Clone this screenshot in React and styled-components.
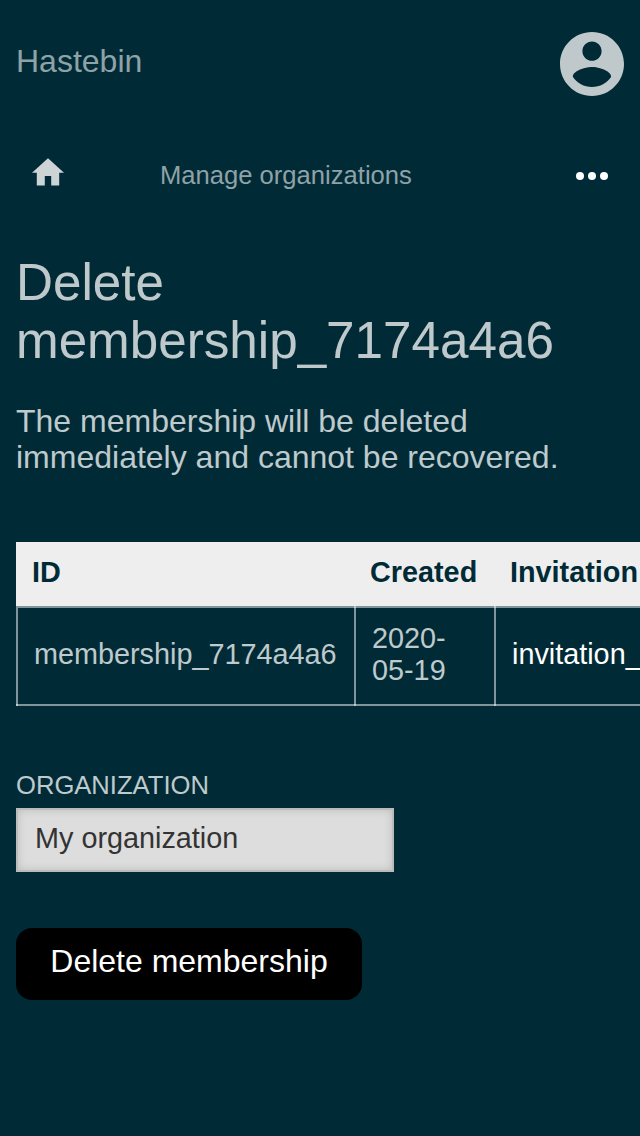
import React from 'react';
import styled, { createGlobalStyle } from 'styled-components';

const text = 'rgba(255, 255, 255, 0.75)';
const muted = '#8fa2a7';
const line = 'rgba(255, 255, 255, 0.5)';

const GlobalStyle = createGlobalStyle`
  *, *::before, *::after { box-sizing: border-box; }
  html { overflow: hidden; }
  body {
    margin: 0;
    background: #002b36;
    color: ${text};
    font-family: 'Liberation Sans', Arial, sans-serif;
    font-size: 32px;
    line-height: 36px;
  }
`;

const Page = styled.div`
  width: 100%;
  height: 1136px;
  overflow: hidden;
`;

const Header = styled.header`
  display: flex;
  align-items: center;
  justify-content: space-between;
  height: 128px;
  padding: 0 16px;
`;

const Brand = styled.a`
  padding-bottom: 6px;
  color: ${muted};
`;

const AccountButton = styled.button`
  display: flex;
  padding: 0;
  border: 0;
  background: none;
  color: ${text};
`;

const Nav = styled.nav`
  display: flex;
  align-items: center;
  height: 96px;
  padding: 0 32px;
`;

const HomeLink = styled.a`
  display: flex;
  width: 128px;
  padding-bottom: 8px;
  color: rgba(255, 255, 255, 0.8);
`;

const NavLink = styled.a`
  flex: 1;
  padding-bottom: 2px;
  color: ${muted};
  font-size: 25.6px;
  line-height: 30px;
`;

const MoreButton = styled.button`
  display: flex;
  padding: 0;
  border: 0;
  background: none;
  color: #fff;
`;

const Main = styled.main`
  padding: 30px 0 0 16px;
`;

const Title = styled.h1`
  margin: 0;
  font-size: 51.2px;
  font-weight: 400;
  line-height: 58px;
`;

const Message = styled.p`
  margin: 33px 0 67px;
`;

const Table = styled.div`
  width: 900px;
  font-size: 28.8px;
  line-height: 32px;
`;

const Row = styled.div`
  display: grid;
  grid-template-columns: 338px 140px 1fr;
`;

const HeadCell = styled.div`
  height: 64px;
  padding: 14px 16px 18px;
  background: #eee;
  color: #002b36;
  font-weight: 700;
`;

const Cell = styled.div`
  display: flex;
  align-items: center;
  height: 100px;
  padding: 0 16px 4px 18px;
  color: ${(p) => (p.$link ? '#fff' : 'inherit')};
  background:
    linear-gradient(${line}, ${line}) left / 2px 100% no-repeat,
    linear-gradient(${line}, ${line}) bottom / 100% 2px no-repeat,
    linear-gradient(${line}, ${line}) ${(p) => (p.$first ? '2px' : '0')} 0 / 100% 2px no-repeat;
`;

const Form = styled.form`
  display: flex;
  flex-direction: column;
  align-items: flex-start;
  padding-top: 64px;
`;

const Label = styled.label`
  margin-bottom: 8px;
  font-size: 25.6px;
  line-height: 30px;
  text-transform: uppercase;
`;

const Select = styled.div`
  width: 378px;
  height: 64px;
  padding: 12px 17px;
  border: 2px solid #bbb;
  background: #ddd;
  box-shadow: inset 0 0 8px rgba(0, 0, 0, 0.15);
  color: #333;
  font-size: 28.8px;
  line-height: 32px;
`;

const DeleteButton = styled.button`
  width: 346px;
  height: 72px;
  margin-top: 56px;
  padding: 0 0 6px;
  border: 0;
  border-radius: 16px;
  background: #000;
  color: #fff;
  font: inherit;
`;

const AccountIcon = () => (
  <svg width="64" height="64" viewBox="2 2 20 20" fill="currentColor">
    <path d="M12 2C6.48 2 2 6.48 2 12s4.48 10 10 10 10-4.48 10-10S17.52 2 12 2zm0 3c1.66 0 3 1.34 3 3s-1.34 3-3 3-3-1.34-3-3 1.34-3 3-3zm0 14.2c-2.5 0-4.71-1.28-6-3.22.03-1.99 4-3.08 6-3.08 1.99 0 5.97 1.09 6 3.08-1.29 1.94-3.5 3.22-6 3.22z" />
  </svg>
);

const HomeIcon = () => (
  <svg width="32" height="28" viewBox="2 2.8 20 17.5" fill="currentColor">
    <path d="M10 20v-6h4v6h5v-8h3L12 3 2 12h3v8z" />
  </svg>
);

const MoreIcon = () => (
  <svg width="32" height="8" viewBox="0 0 32 8" fill="currentColor">
    <circle cx="4" cy="4" r="4" />
    <circle cx="16" cy="4" r="4" />
    <circle cx="28" cy="4" r="4" />
  </svg>
);

export default function App() {
  return (
    <Page>
      <GlobalStyle />
      <Header>
        <Brand>Hastebin</Brand>
        <AccountButton aria-label="Account"><AccountIcon /></AccountButton>
      </Header>
      <Nav>
        <HomeLink aria-label="Home"><HomeIcon /></HomeLink>
        <NavLink>Manage organizations</NavLink>
        <MoreButton aria-label="More"><MoreIcon /></MoreButton>
      </Nav>
      <Main>
        <Title>Delete<br />membership_7174a4a6</Title>
        <Message>The membership will be deleted<br />immediately and cannot be recovered.</Message>
        <Table>
          <Row>
            <HeadCell>ID</HeadCell>
            <HeadCell>Created</HeadCell>
            <HeadCell>Invitation</HeadCell>
          </Row>
          <Row>
            <Cell $first>membership_7174a4a6</Cell>
            <Cell>2020-<br />05-19</Cell>
            <Cell $link>invitation_</Cell>
          </Row>
        </Table>
        <Form>
          <Label>Organization</Label>
          <Select>My organization</Select>
          <DeleteButton type="button">Delete membership</DeleteButton>
        </Form>
      </Main>
    </Page>
  );
}
